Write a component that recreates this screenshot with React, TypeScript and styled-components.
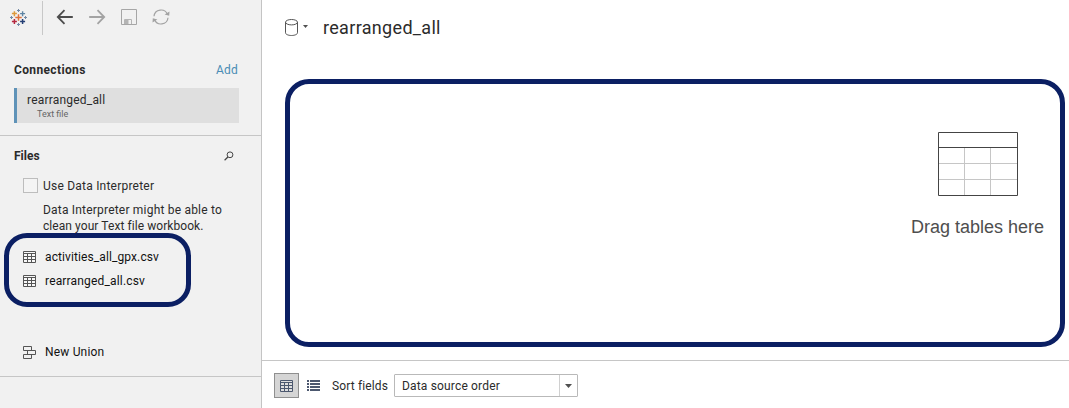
import React from "react";
import styled, { createGlobalStyle } from "styled-components";

const Global = createGlobalStyle`
  * { box-sizing: border-box; }
  body { margin: 0; background: #fff; overflow: hidden; }
  svg { display: block; flex: none; }
`;

const Label = styled.span<{ $size?: number; $track?: number; $bold?: boolean; $color?: string }>`
  font-family: Roboto, "Liberation Sans", sans-serif;
  font-size: ${(p) => p.$size ?? 12}px;
  font-weight: ${(p) => (p.$bold ? 700 : 400)};
  letter-spacing: ${(p) => p.$track ?? 0}px;
  color: ${(p) => p.$color ?? "#2b2b2b"};
  line-height: 16px;
  white-space: nowrap;
`;

const Shell = styled.div`
  display: grid;
  grid-template-columns: 262px 1fr;
  width: 1069px;
  height: 408px;
`;

const Sidebar = styled.aside`
  position: relative;
  display: flex;
  flex-direction: column;
  background: #f1f1f1;
  border-right: 1px solid #c4c4c4;
`;

const Toolbar = styled.div`
  display: flex;
  align-items: center;
  height: 34px;
  padding-left: 10px;
`;

const Divider = styled.div`
  width: 1px;
  height: 34px;
  margin: 1px 13px 0 15px;
  background: #c8c8c8;
`;

const ToolButtons = styled.div`
  display: flex;
  gap: 14px;
`;

const Section = styled.section<{ $height: number }>`
  height: ${(p) => p.$height}px;
  border-bottom: 1px solid #c6c6c6;
`;

const SectionHead = styled.div<{ $top: number; $right: number }>`
  display: flex;
  justify-content: space-between;
  align-items: center;
  padding: ${(p) => p.$top}px ${(p) => p.$right}px 0 14px;
`;

const ConnectionCard = styled.div`
  display: flex;
  flex-direction: column;
  width: 225px;
  height: 35px;
  margin: 10px 0 0 14px;
  padding: 4px 0 0 10px;
  border-left: 3px solid #5f93b8;
  background: #dfdfdf;
`;

const ConnectionType = styled(Label)`
  margin-left: 10px;
  line-height: 13px;
`;

const CheckRow = styled.div`
  display: flex;
  align-items: flex-start;
  gap: 5px;
  height: 16px;
  margin: 14px 0 0 23px;
`;

const CheckBox = styled.div`
  width: 15px;
  height: 15px;
  border: 1px solid #bdbdbd;
  background: #f4f4f4;
`;

const Description = styled.div`
  display: flex;
  flex-direction: column;
  margin: 8px 0 0 43px;
`;

const FileList = styled.div`
  display: flex;
  flex-direction: column;
  margin-top: 11px;
`;

const FileRow = styled.div<{ $top?: number }>`
  display: flex;
  align-items: center;
  gap: 9px;
  height: 24px;
  margin-top: ${(p) => p.$top ?? 0}px;
  padding-left: 23px;
`;

const FilesHighlight = styled.div`
  position: absolute;
  left: 4px;
  top: 233px;
  width: 187px;
  height: 74px;
  border: 5px solid #0b1f63;
  border-radius: 23px;
`;

const Main = styled.main`
  display: flex;
  flex-direction: column;
  background: #fff;
`;

const TitleBar = styled.header`
  display: flex;
  align-items: center;
  height: 55px;
  padding-left: 23px;
`;

const Title = styled(Label)`
  margin-left: 15px;
  line-height: 24px;
`;

const Canvas = styled.div`
  display: flex;
  justify-content: flex-end;
  width: 780px;
  height: 268px;
  margin: 24px 0 13px 23px;
  padding: 48px 16px 0 0;
  border: 5px solid #0b1f63;
  border-radius: 24px;
`;

const DropHint = styled.div`
  display: flex;
  flex-direction: column;
  align-items: flex-end;
  gap: 20px;
`;

const DropText = styled.span`
  font: 18px/22px "Liberation Sans", sans-serif;
  color: #4e4e4e;
  white-space: nowrap;
`;

const Footer = styled.footer`
  display: flex;
  align-items: center;
  flex: 1;
  padding: 2px 0 0 12px;
  border-top: 1px solid #c6c6c6;
`;

const GridToggle = styled.div`
  display: flex;
  align-items: center;
  justify-content: center;
  width: 25px;
  height: 25px;
  margin-right: 8px;
  border: 1px solid #8f8f8f;
  background: #d5d5d5;
`;

const SortLabel = styled(Label)`
  width: 62px;
  margin-left: 12px;
`;

const Select = styled.div`
  display: flex;
  align-items: center;
  width: 184px;
  height: 23px;
  padding-left: 7px;
  border: 1px solid #b9b9b9;
  border-radius: 1px;
`;

const SelectArrow = styled.div`
  display: flex;
  align-items: center;
  justify-content: center;
  width: 18px;
  height: 21px;
  margin-left: auto;
  border-left: 1px solid #d0d0d0;
`;

const Logo = () => (
  <svg width="17" height="17" viewBox="0 0 17 17" fill="none">
    <path d="M8.5 5.3v6.4M5.3 8.5h6.4" stroke="#e0703a" strokeWidth="1.5" />
    <path d="M4.4 2.2v5M1.9 4.6h5" stroke="#dd9a3c" strokeWidth="1.5" />
    <path d="M12.6 2.2v5M10.1 4.6h5" stroke="#5d84a3" strokeWidth="1.4" />
    <path d="M4.4 10v5M1.9 12.5h5" stroke="#b5273f" strokeWidth="1.5" />
    <path d="M12.6 10v5M10.1 12.5h5" stroke="#243f75" strokeWidth="1.5" />
    <path d="M8.5 0v3M7 1.5h3M8.5 14v3M7 15.5h3M1.5 7v3M0 8.5h3M15.5 7v3M14 8.5h3" stroke="#7389a5" />
  </svg>
);

const Arrow = ({ color, flip }: { color: string; flip?: boolean }) => (
  <svg width="18" height="18" viewBox="0 0 18 18" fill="none">
    <path
      d="M8.5 2.2 1.8 9l6.7 6.8M2 9h14.8"
      transform={flip ? "matrix(-1 0 0 1 18 0)" : undefined}
      stroke={color}
      strokeWidth="1.8"
    />
  </svg>
);

const SaveIcon = () => (
  <svg width="18" height="18" viewBox="0 0 18 18" fill="none">
    <path d="M1.5 1.5h15v15h-15z" stroke="#a6a6a6" />
    <path d="M4.5 16v-4.5h7V16" stroke="#b4b4b4" />
    <path d="M5 12h3.5v4H5z" fill="#b4b4b4" />
  </svg>
);

const RefreshIcon = () => (
  <svg width="18" height="18" viewBox="0 0 18 18" fill="none">
    <path d="M2 8.3A7 7 0 0 1 15.5 6.5M16 9.7A7 7 0 0 1 2.5 11.5" stroke="#a3a3a3" strokeWidth="1.2" />
    <path d="m12.6 6.4 4.6 1.4.3-4.4zM5.4 11.6.8 10.2l-.3 4.4z" fill="#a3a3a3" />
  </svg>
);

const SearchIcon = () => (
  <svg width="10" height="10" viewBox="0 0 10 10" fill="none">
    <circle cx="6" cy="3.8" r="2.9" stroke="#444" />
    <path d="M3.9 6 .6 9.2" stroke="#444" strokeWidth="1.2" />
  </svg>
);

const SheetIcon = ({ color = "#555", fill = "#f8f8f8" }: { color?: string; fill?: string }) => (
  <svg width="13" height="12" viewBox="0 0 13 12" fill="none" stroke={color}>
    <path d="M.5.5h12v11H.5z" fill={fill} />
    <path d="M1 2.5h11M1 5.5h11M1 8.5h11M4.5 2.5v9M8.5 2.5v9" />
  </svg>
);

const UnionIcon = () => (
  <svg width="13" height="13" viewBox="0 0 13 13" fill="none" stroke="#555">
    <path d="M.5.5h8v4h-8zM4.5 4.5h8v4h-8zM.5 8.5h8v4h-8z" />
  </svg>
);

const ListIcon = () => (
  <svg width="13" height="11" viewBox="0 0 13 11" stroke="#4c586f" strokeWidth="2">
    <path d="M0 1h2M3 1h10M0 4h2M3 4h10M0 7h2M3 7h10M0 10h2M3 10h10" />
  </svg>
);

const DatabaseIcon = () => (
  <svg width="13" height="17" viewBox="0 0 13 17" fill="none" stroke="#555">
    <ellipse cx="6.5" cy="3.2" rx="6" ry="2.7" />
    <path d="M.5 3.2v10.6c0 1.5 2.7 2.7 6 2.7s6-1.2 6-2.7V3.2" />
  </svg>
);

const Caret = ({ width }: { width: number }) => (
  <svg width={width} height={width / 2 + 0.5} viewBox="0 0 7 4">
    <path d="M0 0h7L3.5 4z" fill="#505050" />
  </svg>
);

const TableDrawing = () => (
  <svg width="80" height="64" viewBox="0 0 80 64" fill="none">
    <path d="M1 31.5h78M1 47.5h78M26.5 16v47M52.5 16v47" stroke="#c6c6c6" />
    <path d="M.5.5h79v63H.5zM1 15.5h78" stroke="#444" />
  </svg>
);

const TableSlot = styled.div`
  margin-right: 26px;
`;

const CaretSlot = styled.div`
  margin: -2px 0 0 5px;
`;

export default function App() {
  return (
    <Shell>
      <Global />
      <Sidebar>
        <Toolbar>
          <Logo />
          <Divider />
          <ToolButtons>
            <Arrow color="#4d4d4d" />
            <Arrow color="#a3a3a3" flip />
            <SaveIcon />
            <RefreshIcon />
          </ToolButtons>
        </Toolbar>
        <Section $height={102}>
          <SectionHead $top={28} $right={23}>
            <Label $bold $track={0.36}>Connections</Label>
            <Label $color="#4a8db5" $track={0.2}>Add</Label>
          </SectionHead>
          <ConnectionCard>
            <Label $track={0.2}>rearranged_all</Label>
            <ConnectionType $size={9} $color="#666">Text file</ConnectionType>
          </ConnectionCard>
        </Section>
        <Section $height={241}>
          <SectionHead $top={12} $right={27}>
            <Label $bold>Files</Label>
            <SearchIcon />
          </SectionHead>
          <CheckRow>
            <CheckBox />
            <Label $track={0.22}>Use Data Interpreter</Label>
          </CheckRow>
          <Description>
            <Label $track={0.2}>Data Interpreter might be able to</Label>
            <Label $track={0.07}>clean your Text file workbook.</Label>
          </Description>
          <FileList>
            <FileRow>
              <SheetIcon />
              <Label $color="#111" $track={0.1}>activities_all_gpx.csv</Label>
            </FileRow>
            <FileRow>
              <SheetIcon />
              <Label $color="#111" $track={0.17}>rearranged_all.csv</Label>
            </FileRow>
            <FileRow $top={47}>
              <UnionIcon />
              <Label $color="#111" $track={0.18}>New Union</Label>
            </FileRow>
          </FileList>
        </Section>
        <FilesHighlight />
      </Sidebar>
      <Main>
        <TitleBar>
          <DatabaseIcon />
          <CaretSlot>
            <Caret width={5} />
          </CaretSlot>
          <Title $size={18} $track={0.32}>rearranged_all</Title>
        </TitleBar>
        <Canvas>
          <DropHint>
            <TableSlot>
              <TableDrawing />
            </TableSlot>
            <DropText>Drag tables here</DropText>
          </DropHint>
        </Canvas>
        <Footer>
          <GridToggle>
            <SheetIcon color="#4c586f" fill="#dedede" />
          </GridToggle>
          <ListIcon />
          <SortLabel $track={0.13}>Sort fields</SortLabel>
          <Select>
            <Label $track={0.17}>Data source order</Label>
            <SelectArrow>
              <Caret width={7} />
            </SelectArrow>
          </Select>
        </Footer>
      </Main>
    </Shell>
  );
}
